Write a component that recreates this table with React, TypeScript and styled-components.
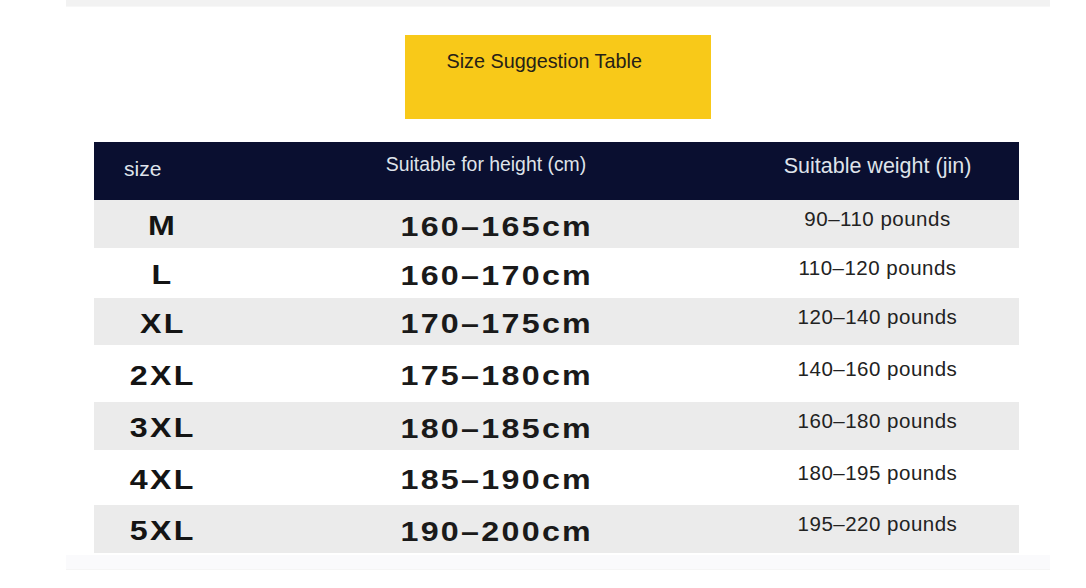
import React from "react";
import styled, { createGlobalStyle } from "styled-components";

const Global = createGlobalStyle`
  html, body { margin: 0; padding: 0; background: #ffffff; }
  body { font-family: "Liberation Sans", Arial, sans-serif; }
`;

const Page = styled.div`
  width: 1086px;
  height: 588px;
  overflow: hidden;
  display: flex;
  flex-direction: column;
`;

const TopBand = styled.div`
  margin: 0 36px 0 66px;
  height: 6px;
  background: #f2f2f2;
  border-bottom: 1px solid #f7f7f7;
`;

const Content = styled.div`
  width: 925px;
  margin-left: 94px;
  display: flex;
  flex-direction: column;
`;

const TitleBox = styled.div`
  align-self: center;
  width: 306px;
  height: 84px;
  margin-top: 28px;
  margin-left: 2px;
  background: #f8c919;
  box-sizing: border-box;
  padding: 15px 0 0 42px;
  font-size: 19.8px;
  color: #262117;
`;

const Table = styled.div`
  margin-top: 23px;
  display: flex;
  flex-direction: column;
`;

const HeaderRow = styled.div`
  height: 58px;
  background: #0a0f30;
  display: grid;
  grid-template-columns: 138px 530px 257px;
  color: #dfe3ea;
`;

const HeadCell = styled.div<{ $left?: boolean; $pl?: number; $pr?: number; $up: number; $fs: number }>`
  display: flex;
  align-items: center;
  justify-content: ${(p) => (p.$left ? "flex-start" : "center")};
  padding-left: ${(p) => p.$pl ?? 0}px;
  padding-right: ${(p) => p.$pr ?? 0}px;
  padding-bottom: ${(p) => p.$up}px;
  font-size: ${(p) => p.$fs}px;
`;

const Row = styled.div<{ $h: number; $shade: boolean }>`
  height: ${(p) => p.$h}px;
  background: ${(p) => (p.$shade ? "#ebebeb" : "#ffffff")};
  display: grid;
  grid-template-columns: 138px 530px 257px;
  align-items: center;
  color: #141414;
`;

const SizeCell = styled.div`
  text-align: center;
  font-weight: 700;
  font-size: 28px;
  letter-spacing: 2px;
  padding-top: 4px;
`;

const HeightCell = styled.div`
  text-align: center;
  font-weight: 700;
  font-size: 28px;
  letter-spacing: 2px;
  color: #1a1a1a;
  padding-top: 5px;
`;

const Stretch = styled.span`
  display: inline-block;
  transform: scaleX(1.15);
`;

const WeightCell = styled.div`
  text-align: center;
  font-size: 20.5px;
  letter-spacing: 0.5px;
  padding-right: 26px;
  padding-bottom: 10px;
  color: #222;
`;

const BottomBand = styled.div`
  margin: 2px 36px 0 66px;
  height: 14px;
  background: #fafafc;
  border-bottom: 1px solid #f5f5f5;
`;

const rows = [
  { size: "M", height: "160–165cm", weight: "90–110 pounds", h: 48 },
  { size: "L", height: "160–170cm", weight: "110–120 pounds", h: 50 },
  { size: "XL", height: "170–175cm", weight: "120–140 pounds", h: 47 },
  { size: "2XL", height: "175–180cm", weight: "140–160 pounds", h: 57 },
  { size: "3XL", height: "180–185cm", weight: "160–180 pounds", h: 48 },
  { size: "4XL", height: "185–190cm", weight: "180–195 pounds", h: 55 },
  { size: "5XL", height: "190–200cm", weight: "195–220 pounds", h: 48 },
];

export default function App() {
  return (
    <>
      <Global />
      <Page>
        <TopBand />
        <Content>
          <TitleBox>Size Suggestion Table</TitleBox>
          <Table>
            <HeaderRow>
              <HeadCell $left $pl={30} $up={4} $fs={21}>size</HeadCell>
              <HeadCell $pr={22} $up={14} $fs={19.4}>Suitable for height (cm)</HeadCell>
              <HeadCell $pr={26} $up={10} $fs={21.5}>Suitable weight (jin)</HeadCell>
            </HeaderRow>
            {rows.map((r, i) => (
              <Row key={r.size} $h={r.h} $shade={i % 2 === 0}>
                <SizeCell><Stretch>{r.size}</Stretch></SizeCell>
                <HeightCell><Stretch>{r.height}</Stretch></HeightCell>
                <WeightCell>{r.weight}</WeightCell>
              </Row>
            ))}
          </Table>
        </Content>
        <BottomBand />
      </Page>
    </>
  );
}
